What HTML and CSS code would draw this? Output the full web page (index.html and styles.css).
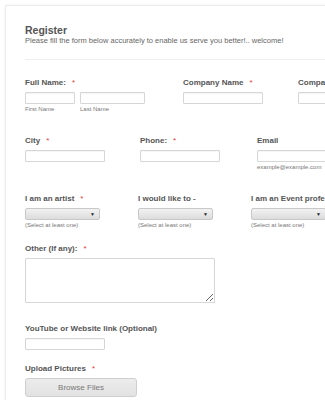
FILE: index.html
```html
<!DOCTYPE html>
<html>
<head>
<meta charset="utf-8">
<link rel="stylesheet" href="styles.css">
</head>
<body>
<div class="card">
  <div class="header">
    <div class="title">Register</div>
    <div class="subtitle">Please fill the form below accurately to enable us serve you better!.. welcome!</div>
  </div>
  <div class="divider"></div>

  <div class="row row1">
    <div class="field w158">
      <div class="label">Full Name:<span class="req">*</span></div>
      <div class="name-pair">
        <div class="sub-field">
          <input class="input w50" type="text">
          <div class="sublabel">First Name</div>
        </div>
        <div class="sub-field">
          <input class="input w65" type="text">
          <div class="sublabel">Last Name</div>
        </div>
      </div>
    </div>
    <div class="field w115">
      <div class="label">Company Name<span class="req">*</span></div>
      <input class="input w80" type="text">
    </div>
    <div class="field w115">
      <div class="label">Company Address</div>
      <input class="input w80" type="text">
    </div>
  </div>

  <div class="row row2">
    <div class="field w115">
      <div class="label">City<span class="req">*</span></div>
      <input class="input w80" type="text">
    </div>
    <div class="field w117">
      <div class="label">Phone:<span class="req">*</span></div>
      <input class="input w80" type="text">
    </div>
    <div class="field w115">
      <div class="label">Email</div>
      <input class="input w80" type="text">
      <div class="sublabel">example@example.com</div>
    </div>
  </div>

  <div class="row row3">
    <div class="field w113">
      <div class="label">I am an artist<span class="req">*</span></div>
      <div class="select"><span class="arrow">&#9660;</span></div>
      <div class="sublabel">(Select at least one)</div>
    </div>
    <div class="field w113">
      <div class="label">I would like to -</div>
      <div class="select"><span class="arrow">&#9660;</span></div>
      <div class="sublabel">(Select at least one)</div>
    </div>
    <div class="field w113">
      <div class="label">I am an Event professional</div>
      <div class="select"><span class="arrow">&#9660;</span></div>
      <div class="sublabel">(Select at least one)</div>
    </div>
  </div>

  <div class="row row4">
    <div class="field">
      <div class="label">Other (If any):<span class="req">*</span></div>
      <textarea class="textarea"></textarea>
    </div>
  </div>

  <div class="row row5">
    <div class="field">
      <div class="label">YouTube or Website link (Optional)</div>
      <input class="input w80" type="text">
    </div>
  </div>

  <div class="row row6">
    <div class="field">
      <div class="label">Upload Pictures<span class="req">*</span></div>
      <div class="button">Browse Files</div>
    </div>
  </div>
</div>
</body>
</html>
```
FILE: styles.css
```css
html, body {
  margin: 0;
  padding: 0;
  background: #ffffff;
  overflow: hidden;
  width: 325px;
  height: 400px;
}
body {
  font-family: "Liberation Sans", Arial, sans-serif;
  color: #555555;
}
.card {
  margin: 5px 0 0 5px;
  width: 340px;
  min-height: 420px;
  border: 1px solid #ececec;
  box-shadow: 0 0 3px rgba(0,0,0,0.05);
  padding: 18px 0 0 19px;
  box-sizing: border-box;
}
.header {
  display: flex;
  flex-direction: column;
}
.title {
  font-size: 10.5px;
  font-weight: bold;
  line-height: 12px;
  color: #555;
}
.subtitle {
  font-size: 7.5px;
  line-height: 10px;
  color: #666;
  white-space: nowrap;
}
.divider {
  margin-top: 13px;
  height: 1px;
  background: #eeeeee;
}
.row {
  display: flex;
}
.row1 { margin-top: 18px; }
.row2 { margin-top: 23px; }
.row3 { margin-top: 23px; }
.row4 { margin-top: 15px; }
.row5 { margin-top: 21px; }
.row6 { margin-top: 14px; }
.field {
  display: flex;
  flex-direction: column;
  flex-shrink: 0;
}
.w158 { width: 158px; }
.w115 { width: 115px; }
.w117 { width: 117px; }
.w113 { width: 113px; }
.label {
  font-size: 8px;
  font-weight: bold;
  line-height: 10px;
  height: 10px;
  color: #555;
  white-space: nowrap;
  margin-bottom: 4px;
}
.req {
  color: #e53935;
  margin-left: 6px;
  font-weight: normal;
}
.name-pair {
  display: flex;
  gap: 5px;
}
.sub-field {
  display: flex;
  flex-direction: column;
}
.input {
  display: block;
  box-sizing: border-box;
  height: 12px;
  margin: 0;
  padding: 0;
  border: 1px solid #d6d6d6;
  border-radius: 1px;
  background: #fff;
  box-shadow: inset 0 1px 1px rgba(0,0,0,0.04);
}
.w50 { width: 50px; }
.w65 { width: 65px; }
.w80 { width: 80px; }
.sublabel {
  font-size: 6px;
  line-height: 8px;
  color: #777;
  margin-top: 1px;
  white-space: nowrap;
}
.select {
  box-sizing: border-box;
  width: 75px;
  height: 12px;
  border: 1px solid #c8c8c8;
  border-radius: 2px;
  background: linear-gradient(#f2f2f2, #dcdcdc);
  display: flex;
  align-items: center;
  justify-content: flex-end;
  padding-right: 4px;
}
.arrow {
  font-size: 5px;
  line-height: 5px;
  color: #222;
}
.textarea {
  display: block;
  box-sizing: border-box;
  width: 190px;
  height: 45px;
  margin: 0;
  padding: 0;
  border: 1px solid #d6d6d6;
  border-radius: 1px;
  background: #fff;
  resize: both;
  font-size: 8px;
}
.button {
  box-sizing: border-box;
  width: 112px;
  height: 19px;
  border: 1px solid #cfcfcf;
  border-radius: 3px;
  background: linear-gradient(#ececec, #e2e2e2);
  color: #777;
  font-size: 8px;
  display: flex;
  align-items: center;
  justify-content: center;
}
```
